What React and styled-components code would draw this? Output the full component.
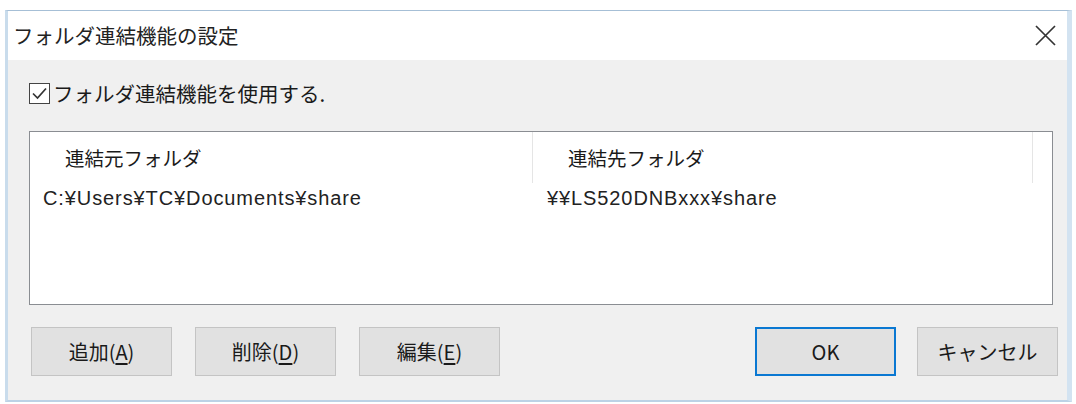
import React from "react";
import styled, { createGlobalStyle } from "styled-components";

const GlobalStyle = createGlobalStyle`
  html, body {
    margin: 0;
    padding: 0;
    background: #ffffff;
  }
  body {
    font-family: "Noto Sans CJK JP", "Noto Sans", sans-serif;
    color: #1a1a1a;
  }
`;

const Dialog = styled.div`
  box-sizing: border-box;
  width: 1067px;
  height: 392px;
  margin: 10px 0 0 5px;
  display: flex;
  flex-direction: column;
  border-top: 1px solid #a6bfd6;
  border-left: 3px solid #c9dcec;
  border-right: 5px solid #d3e3f1;
  border-bottom: 2px solid #bcd2e6;
  background: #f0f0f0;
`;

const TitleBar = styled.div`
  height: 49px;
  flex: none;
  display: flex;
  align-items: center;
  justify-content: space-between;
  padding: 0 11px 0 5px;
  background: #ffffff;
`;

const Title = styled.span`
  font-size: 20.5px;
  color: #222;
  line-height: 1;
`;

const CloseButton = styled.button`
  width: 22px;
  height: 22px;
  padding: 0;
  border: none;
  background: none;
  display: flex;
  align-items: center;
  justify-content: center;
`;

const Body = styled.div`
  flex: 1;
  display: flex;
  flex-direction: column;
  padding: 23px 14px 0 21px;
`;

const CheckRow = styled.label`
  display: flex;
  align-items: center;
  gap: 3px;
  height: 20px;
  font-size: 20.5px;
  line-height: 1;
`;

const CheckBox = styled.span`
  box-sizing: border-box;
  width: 21px;
  height: 21px;
  border: 1px solid #444;
  background: #fff;
  display: flex;
  align-items: center;
  justify-content: center;
`;

const ListBox = styled.div`
  box-sizing: border-box;
  margin-top: 28px;
  height: 174px;
  border: 1px solid #8a8d92;
  background: #ffffff;
  display: flex;
  flex-direction: column;
`;

const HeaderRow = styled.div`
  display: flex;
  height: 51px;
  flex: none;
`;

const HeaderCell = styled.div`
  box-sizing: border-box;
  width: ${(p) => p.$w}px;
  flex: ${(p) => (p.$grow ? 1 : "none")};
  padding-left: 35px;
  display: flex;
  align-items: center;
  font-size: 19.5px;
  border-right: ${(p) => (p.$grow ? "none" : "1px solid #e5e5e5")};
`;

const DataRow = styled.div`
  display: flex;
  height: 30px;
  align-items: center;
`;

const DataCell = styled.div`
  box-sizing: border-box;
  width: ${(p) => p.$w}px;
  padding-left: ${(p) => p.$pad}px;
  font-family: "Liberation Sans", Arial, sans-serif;
  font-size: 20px;
  letter-spacing: 0.9px;
  color: #222;
`;

const ButtonRow = styled.div`
  display: flex;
  justify-content: space-between;
  margin: 22px -5px 0 2px;
`;

const ButtonGroup = styled.div`
  display: flex;
  gap: ${(p) => p.$gap}px;
`;

const Button = styled.button`
  box-sizing: border-box;
  width: 141px;
  height: 49px;
  background: #e1e1e1;
  border: ${(p) => (p.$default ? "2px solid #0a78d2" : "1px solid #c4c4c4")};
  font-family: "Noto Sans CJK JP", "Noto Sans", sans-serif;
  font-size: 20px;
  color: #1a1a1a;
  padding: 0;
  display: flex;
  align-items: center;
  justify-content: center;

  u {
    text-underline-offset: 3px;
  }
`;

export default function App() {
  return (
    <>
      <GlobalStyle />
      <Dialog>
        <TitleBar>
          <Title>フォルダ連結機能の設定</Title>
          <CloseButton aria-label="閉じる">
            <svg width="21" height="21" viewBox="0 0 21 21">
              <path d="M1 1 L20 20 M20 1 L1 20" stroke="#333" strokeWidth="1.7" />
            </svg>
          </CloseButton>
        </TitleBar>
        <Body>
          <CheckRow>
            <CheckBox>
              <svg width="17" height="15" viewBox="0 0 17 15">
                <path d="M2 7.5 L6.5 12 L15 2.5" fill="none" stroke="#333" strokeWidth="1.7" />
              </svg>
            </CheckBox>
            フォルダ連結機能を使用する.
          </CheckRow>
          <ListBox>
            <HeaderRow>
              <HeaderCell $w={503}>連結元フォルダ</HeaderCell>
              <HeaderCell $w={500}>連結先フォルダ</HeaderCell>
              <HeaderCell $grow />
            </HeaderRow>
            <DataRow>
              <DataCell $w={503} $pad={13}>C:¥Users¥TC¥Documents¥share</DataCell>
              <DataCell $w={500} $pad={14}>¥¥LS520DNBxxx¥share</DataCell>
            </DataRow>
          </ListBox>
          <ButtonRow>
            <ButtonGroup $gap={23}>
              <Button>追加(<u>A</u>)</Button>
              <Button>削除(<u>D</u>)</Button>
              <Button>編集(<u>E</u>)</Button>
            </ButtonGroup>
            <ButtonGroup $gap={21}>
              <Button $default>OK</Button>
              <Button>キャンセル</Button>
            </ButtonGroup>
          </ButtonRow>
        </Body>
      </Dialog>
    </>
  );
}
